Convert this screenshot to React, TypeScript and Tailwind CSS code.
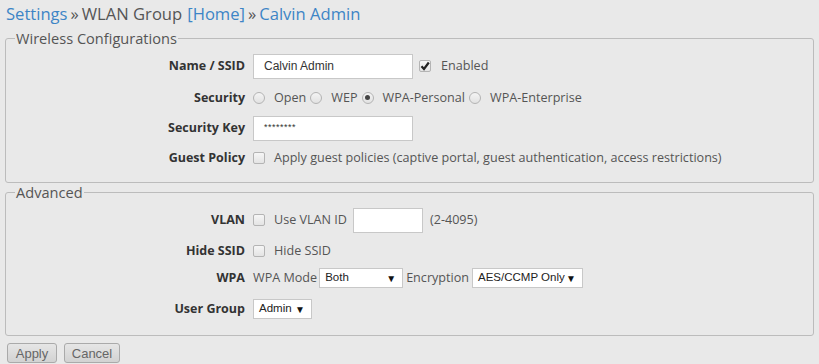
import React from "react";

const body = "font-['Open_Sans',sans-serif]";
const arial = "font-['Liberation_Sans',Arial,sans-serif]";

const Radio: React.FC<{ checked?: boolean }> = ({ checked }) => (
  <span className="flex h-[12px] w-[12px] flex-none items-center justify-center rounded-full border border-[#b4b4b4] bg-gradient-to-b from-[#f4f4f4] to-[#e2e2e2]">
    {checked && <span className="h-[5px] w-[5px] rounded-full bg-[#444]" />}
  </span>
);

const Check: React.FC<{ checked?: boolean }> = ({ checked }) => (
  <span className="flex h-[12px] w-[12px] flex-none items-center justify-center rounded-[2px] border border-[#b4b4b4] bg-gradient-to-b from-[#f6f6f6] to-[#e4e4e4]">
    {checked && (
      <svg viewBox="0 0 10 10" className="h-[10px] w-[10px]">
        <path d="M1.5 5.2 L4 8 L8.8 1.5" fill="none" stroke="#222" strokeWidth="2.2" />
      </svg>
    )}
  </span>
);

const Select: React.FC<{ value: string; width: string }> = ({ value, width }) => (
  <span
    className={`flex h-[20px] ${width} flex-none items-center justify-between whitespace-nowrap border border-[#c8c8c8] bg-white pl-[5px] pr-[6px] text-[11.5px] text-[#222] ${arial}`}
  >
    <span>{value}</span>
    <span className="text-[10px] text-[#111]">▼</span>
  </span>
);

const Row: React.FC<{ label: string; className: string; children: React.ReactNode }> = ({
  label,
  className,
  children,
}) => (
  <div className={`flex items-center ${className}`}>
    <div className="w-[239px] flex-none text-right text-[12.5px] font-bold text-[#333]">{label}</div>
    <div className="ml-[8px] flex items-center whitespace-nowrap text-[12.6px] text-[#555]">{children}</div>
  </div>
);

const Legend: React.FC<{ children: React.ReactNode }> = ({ children }) => (
  <legend className="ml-[9px] px-[1px] text-[14.6px] leading-[20px] text-[#555]">{children}</legend>
);

export default function App() {
  return (
    <div className={`min-h-[364px] w-[819px] bg-[#e9e9e9] px-[5px] ${body}`}>
      <div className="flex h-[28px] items-center pl-[1px] text-[16.6px] leading-[24px] text-[#555]">
        <span className="text-[#3d85c6]">Settings</span>
        <span className="mx-[3px]">»</span>
        <span>WLAN Group</span>
        <span className="ml-[5px] text-[#3d85c6]">[Home]</span>
        <span className="mx-[3px]">»</span>
        <span className="text-[#3d85c6]">Calvin Admin</span>
      </div>

      <fieldset className="rounded-[3px] border border-[#bcbcbc] px-0 pb-[9px] pt-[3px]">
        <Legend>Wireless Configurations</Legend>
        <Row label="Name / SSID" className="h-[30px]">
          <span className={`flex h-[25px] w-[160px] items-center border border-[#c8c8c8] bg-white pl-[10px] text-[12px] text-[#333] ${arial}`}>
            Calvin Admin
          </span>
          <span className="ml-[6px]">
            <Check checked />
          </span>
          <span className="ml-[10px]">Enabled</span>
        </Row>
        <Row label="Security" className="mt-[2px] h-[30px]">
          <Radio />
          <span className="ml-[9px] mr-[4px]">Open</span>
          <Radio />
          <span className="ml-[9px] mr-[4px]">WEP</span>
          <Radio checked />
          <span className="ml-[9px] mr-[4px]">WPA-Personal</span>
          <Radio />
          <span className="ml-[9px]">WPA-Enterprise</span>
        </Row>
        <Row label="Security Key" className="h-[30px]">
          <span className={`flex h-[25px] w-[160px] items-center border border-[#c8c8c8] bg-white pl-[10px] text-[9px] tracking-[0.5px] text-[#333] ${arial}`}>
            ********
          </span>
        </Row>
        <Row label="Guest Policy" className="h-[30px]">
          <Check />
          <span className="ml-[9px]">Apply guest policies (captive portal, guest authentication, access restrictions)</span>
        </Row>
      </fieldset>

      <fieldset className="mt-[-1px] rounded-[3px] border border-[#bcbcbc] px-0 pb-[12px] pt-[4px]">
        <Legend>Advanced</Legend>
        <Row label="VLAN" className="h-[28px]">
          <Check />
          <span className="ml-[9px]">Use VLAN ID</span>
          <span className="ml-[6px] h-[25px] w-[70px] border border-[#c8c8c8] bg-white" />
          <span className="ml-[7px]">(2-4095)</span>
        </Row>
        <Row label="Hide SSID" className="mt-[3px] h-[28px]">
          <Check />
          <span className="ml-[9px]">Hide SSID</span>
        </Row>
        <Row label="WPA" className="h-[26px]">
          <span className="mr-[2px]">WPA Mode</span>
          <Select value="Both" width="w-[84px]" />
          <span className="mx-[3px]">Encryption</span>
          <Select value="AES/CCMP Only" width="w-[111px]" />
        </Row>
        <Row label="User Group" className="mt-[4px] h-[28px]">
          <Select value="Admin" width="w-[59px]" />
        </Row>
      </fieldset>

      <div className={`mt-[7px] flex gap-[7px] pl-[2px] text-[13px] text-[#666] ${arial}`}>
        <button className="h-[20px] w-[50px] rounded-[3px] border border-[#aaa] bg-gradient-to-b from-[#e6e6e6] to-[#d2d2d2]">
          Apply
        </button>
        <button className="h-[20px] w-[56px] rounded-[3px] border border-[#aaa] bg-gradient-to-b from-[#e6e6e6] to-[#d2d2d2]">
          Cancel
        </button>
      </div>
    </div>
  );
}
